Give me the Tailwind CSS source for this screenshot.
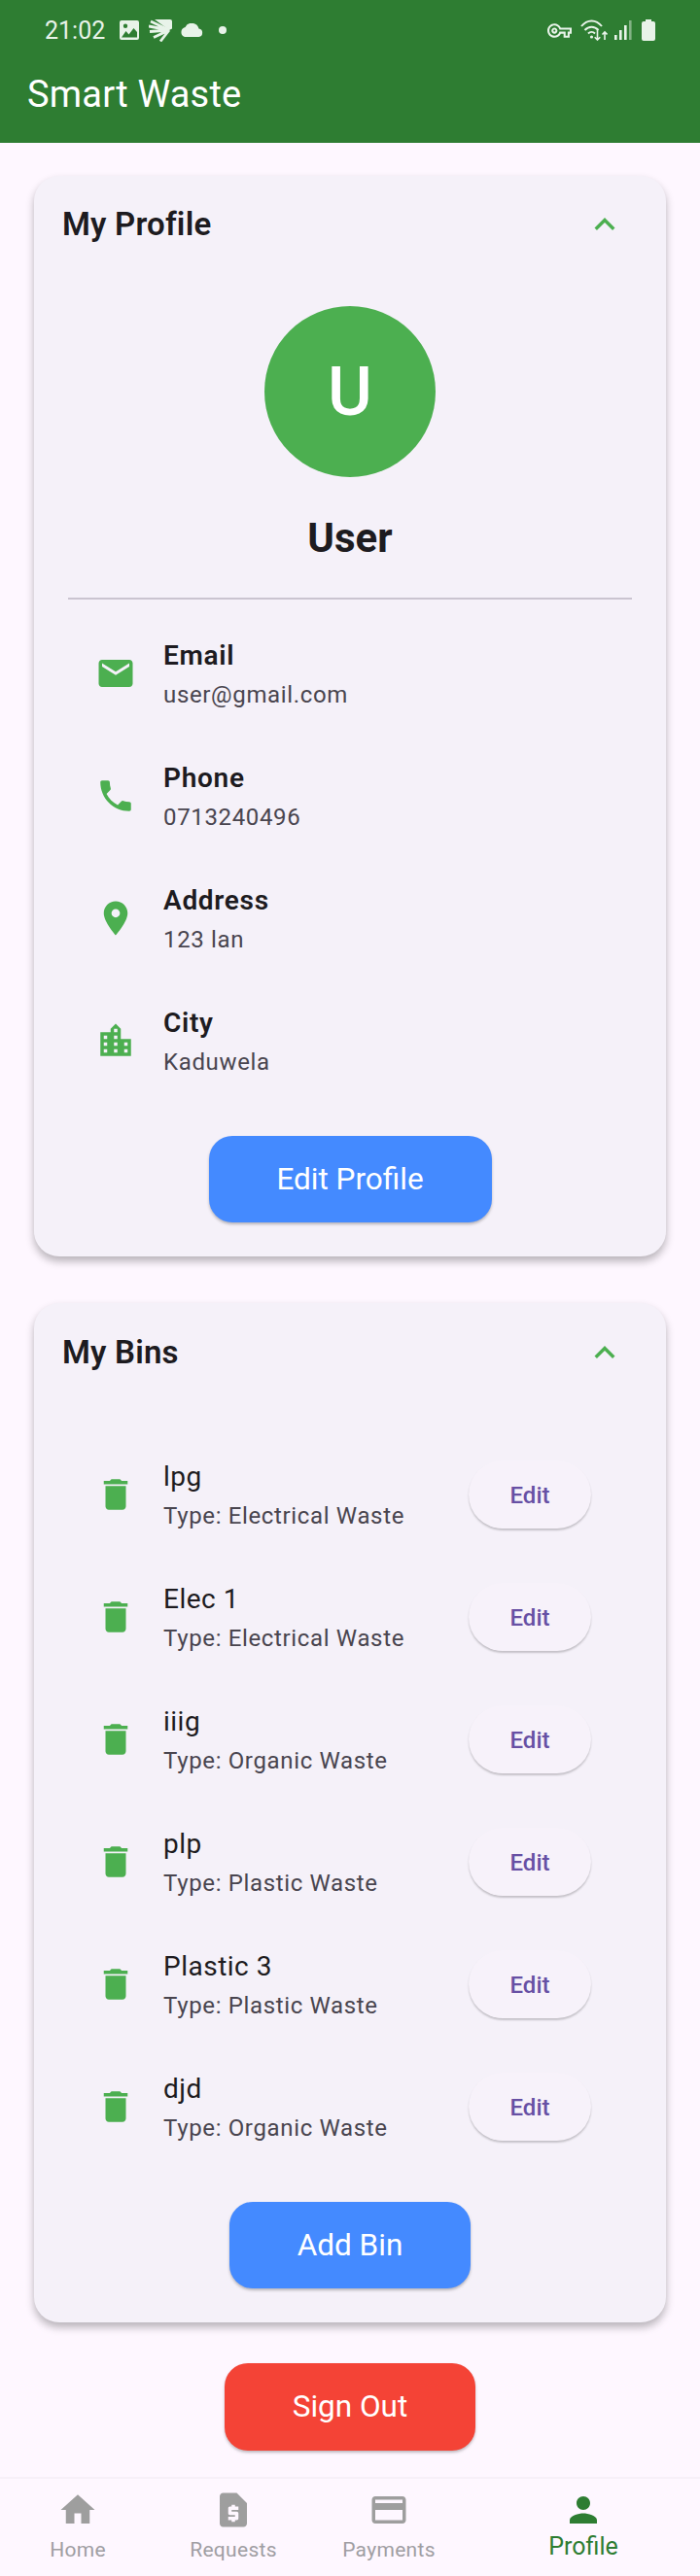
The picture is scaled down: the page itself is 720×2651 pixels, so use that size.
<!DOCTYPE html>
<html lang="en">
  <head>
    <meta charset="UTF-8" />
    <meta name="viewport" content="width=device-width, initial-scale=1.0" />
    <title>Smart Waste</title>
    <script src="https://cdn.jsdelivr.net/npm/@tailwindcss/browser@4"></script>
  </head>
  <body class="bg-[#fef7ff] font-['Roboto',sans-serif] text-[#1d1b20]">
    <div class="w-[720px] h-[2651px] flex flex-col overflow-hidden">
      <!-- App bar + status bar -->
      <header class="bg-[#2e7d32] h-[147px] shrink-0 text-white">
        <div class="h-[62px] flex items-center justify-between pl-[46px] pr-[46px]">
          <div class="flex items-center text-[#e8f3e9]">
            <span class="text-[25px] leading-none w-[66px]">21:02</span>
            <svg class="ml-[11px]" width="20" height="20" viewBox="0 0 20 20" fill="currentColor"><path fill-rule="evenodd" d="M2 0h16a2 2 0 0 1 2 2v16a2 2 0 0 1-2 2H2a2 2 0 0 1-2-2V2a2 2 0 0 1 2-2zm0 17.500h16V12l-3.500-4-5 6.500-3-3.500zM6 3.500a2.200 2.200 0 1 0 0 4.400 2.200 2.200 0 0 0 0-4.400z"/></svg>
            <svg class="ml-[10px]" width="24" height="23" viewBox="0 0 24 23" fill="none" stroke="currentColor"><path d="M6 0h16a2 2 0 0 1 2 2v7.500L21 11z" fill="currentColor" stroke="none"/><path d="M21 11L2 2M21 11L0 7M21 11L1 12.500M21 11L5 18.500M21 11L12 22.500" stroke-width="2.800"/></svg>
            <svg class="ml-[8px]" width="24" height="14" viewBox="0 0 24 14" fill="currentColor"><path d="M19.500 5.500A7.500 7.500 0 0 0 5.500 4 5.200 5.200 0 0 0 5 14h14.500a4.300 4.300 0 0 0 0-8.500z"/></svg>
            <span class="ml-[16px] w-[8px] h-[8px] rounded-full bg-current"></span>
          </div>
          <div class="flex items-center text-[#e8f3e9]">
            <svg width="25" height="25" viewBox="0 0 24 24" fill="currentColor"><path d="M22 19h-6v-4h-2.680c-1.140 2.420-3.600 4-6.320 4-3.860 0-7-3.140-7-7s3.140-7 7-7c2.720 0 5.170 1.580 6.320 4H24v6h-2v4zm-4-2h2v-4h2v-2H11.940l-.23-.67C11.010 8.340 9.110 7 7 7c-2.760 0-5 2.240-5 5s2.240 5 5 5c2.110 0 4.010-1.340 4.710-3.330l.23-.67H18v4zM7 15c-1.650 0-3-1.350-3-3s1.350-3 3-3 3 1.350 3 3-1.350 3-3 3zm0-4c-.55 0-1 .45-1 1s.45 1 1 1 1-.45 1-1-.45-1-1-1z"/></svg>
            <svg class="ml-[9px]" width="28" height="22" viewBox="0 0 28 22" fill="none" stroke="currentColor" stroke-width="2"><path d="M1 7c6-7.500 15-7.500 21 0M4.500 11c4-4.500 10-4.500 14 0M8 14.500c2-2 5-2 7 0"/><circle cx="11.500" cy="18" r="1.600" fill="currentColor" stroke="none"/><path d="M17.500 11v10m-2.800-2.800l2.800 2.800 2.800-2.800M25 21v-8m-2.500 2.500L25 13l2.500 2.500" stroke-width="1.600"/></svg>
            <svg class="ml-[7px]" width="18" height="20" viewBox="0 0 18 20" fill="currentColor"><rect x="0" y="15" width="2.600" height="5"/><rect x="5" y="10" width="2.600" height="10"/><rect x="10" y="5" width="2.600" height="15"/><rect x="15" y="0" width="2.600" height="20" opacity=".45"/></svg>
            <svg class="ml-[10px]" width="14" height="22" viewBox="0 0 14 22" fill="currentColor"><path d="M4 0h6v2h2a2 2 0 0 1 2 2v16a2 2 0 0 1-2 2H2a2 2 0 0 1-2-2V4a2 2 0 0 1 2-2h2z"/></svg>
          </div>
        </div>
        <h1 class="pl-[28px] text-[38px] leading-[64px] mt-[3px] tracking-[0.2px]">Smart Waste</h1>
      </header>

      <main class="flex-1 min-h-0 px-[35px] pt-[34px]">
        <!-- Profile card -->
        <section class="bg-[#f5f1f9] rounded-[26px] shadow-[0_5px_8px_rgba(0,0,0,0.28)] px-[29px] pb-[35px]">
          <div class="h-[100px] flex items-center justify-between pr-[13px]">
            <h2 class="text-[33px] font-semibold tracking-[0.2px]">My Profile</h2>
            <svg width="42" height="42" viewBox="0 0 24 24" fill="#4caf50"><path d="M12 8l-6 6 1.410 1.410L12 10.830l4.590 4.580L18 14z"/></svg>
          </div>
          <div class="flex flex-col items-center">
            <div class="w-[176px] h-[176px] rounded-full bg-[#4caf50] text-white flex items-center justify-center text-[70px] font-medium mt-[34px]">U</div>
            <p class="text-[42px] font-bold leading-[48px] mt-[39px]">User</p>
          </div>
          <div class="h-[2px] bg-[#cac4d0] mx-[6px] mt-[37px]"></div>
          <!-- Info rows -->
          <ul class="mt-[13px] pl-[34px]">
            <li class="h-[126px] flex items-center">
              <svg class="w-[42px] h-[42px]" viewBox="0 0 24 24" fill="#4caf50"><path d="M20 4H4c-1.100 0-1.990.9-1.990 2L2 18c0 1.100.9 2 2 2h16c1.100 0 2-.9 2-2V6c0-1.100-.9-2-2-2zm0 4l-8 5-8-5V6l8 5 8-5v2z"/></svg>
              <div class="ml-[28px] pt-[4px]"><p class="text-[28px] font-semibold leading-[38px] tracking-[0.7px]">Email</p><p class="text-[24px] text-[#49454f] leading-[38px] mt-[2px] tracking-[0.65px]">user@gmail.com</p></div>
            </li>
            <li class="h-[126px] flex items-center">
              <svg class="w-[42px] h-[42px]" viewBox="0 0 24 24" fill="#4caf50"><path d="M6.620 10.790c1.440 2.830 3.760 5.140 6.590 6.590l2.200-2.200c.27-.27.67-.36 1.020-.24 1.120.37 2.330.57 3.570.57.550 0 1 .45 1 1V20c0 .55-.45 1-1 1-9.390 0-17-7.610-17-17 0-.55.45-1 1-1h3.500c.55 0 1 .45 1 1 0 1.250.2 2.450.57 3.570.11.350.03.740-.25 1.020l-2.200 2.200z"/></svg>
              <div class="ml-[28px] pt-[4px]"><p class="text-[28px] font-semibold leading-[38px] tracking-[0.7px]">Phone</p><p class="text-[24px] text-[#49454f] leading-[38px] mt-[2px] tracking-[0.65px]">0713240496</p></div>
            </li>
            <li class="h-[126px] flex items-center">
              <svg class="w-[42px] h-[42px]" viewBox="0 0 24 24" fill="#4caf50"><path d="M12 2C8.130 2 5 5.130 5 9c0 5.250 7 13 7 13s7-7.750 7-13c0-3.870-3.130-7-7-7zm0 9.500a2.500 2.500 0 0 1 0-5 2.500 2.500 0 0 1 0 5z"/></svg>
              <div class="ml-[28px] pt-[4px]"><p class="text-[28px] font-semibold leading-[38px] tracking-[0.7px]">Address</p><p class="text-[24px] text-[#49454f] leading-[38px] mt-[2px] tracking-[0.65px]">123 lan</p></div>
            </li>
            <li class="h-[126px] flex items-center">
              <svg class="w-[42px] h-[42px]" viewBox="0 0 24 24" fill="#4caf50"><path d="M15 11V5l-3-3-3 3v2H3v14h18V11h-6zm-8 8H5v-2h2v2zm0-4H5v-2h2v2zm0-4H5V9h2v2zm6 8h-2v-2h2v2zm0-4h-2v-2h2v2zm0-4h-2V9h2v2zm0-4h-2V5h2v2zm6 12h-2v-2h2v2zm0-4h-2v-2h2v2z"/></svg>
              <div class="ml-[28px] pt-[4px]"><p class="text-[28px] font-semibold leading-[38px] tracking-[0.7px]">City</p><p class="text-[24px] text-[#49454f] leading-[38px] mt-[2px] tracking-[0.65px]">Kaduwela</p></div>
            </li>
          </ul>
          <div class="flex justify-center mt-[35px]">
            <button class="w-[291px] h-[89px] rounded-[24px] bg-[#448aff] text-white text-[31.5px] shadow-[0_2px_3px_rgba(0,0,0,0.25)]">Edit Profile</button>
          </div>
        </section>

        <!-- Bins card -->
        <section class="mt-[48px] bg-[#f5f1f9] rounded-[26px] shadow-[0_5px_8px_rgba(0,0,0,0.28)] px-[29px] pb-[35px]">
          <div class="h-[102px] flex items-center justify-between pr-[13px]">
            <h2 class="text-[33px] font-semibold tracking-[0.2px]">My Bins</h2>
            <svg width="42" height="42" viewBox="0 0 24 24" fill="#4caf50"><path d="M12 8l-6 6 1.410 1.410L12 10.830l4.590 4.580L18 14z"/></svg>
          </div>
          <ul class="mt-[32px] pl-[34px] pr-[48px]">
            <li class="h-[126px] flex items-center">
              <svg class="w-[42px] h-[42px]" viewBox="0 0 24 24" fill="#4caf50"><path d="M6 19c0 1.100.9 2 2 2h8c1.100 0 2-.9 2-2V7H6v12zM19 4h-3.500l-1-1h-5l-1 1H5v2h14V4z"/></svg>
              <div class="ml-[28px] pt-[4px] flex-1"><p class="text-[28px] leading-[38px] tracking-[0.5px]">lpg</p><p class="text-[24px] text-[#49454f] leading-[38px] mt-[2px] tracking-[0.65px]">Type: Electrical Waste</p></div>
              <button class="w-[126px] h-[70px] pt-[2px] rounded-full bg-[#f7f2fa] text-[#6750a4] text-[24px] font-medium shadow-[0_2px_2px_rgba(0,0,0,0.2)]">Edit</button>
            </li>
            <li class="h-[126px] flex items-center">
              <svg class="w-[42px] h-[42px]" viewBox="0 0 24 24" fill="#4caf50"><path d="M6 19c0 1.100.9 2 2 2h8c1.100 0 2-.9 2-2V7H6v12zM19 4h-3.500l-1-1h-5l-1 1H5v2h14V4z"/></svg>
              <div class="ml-[28px] pt-[4px] flex-1"><p class="text-[28px] leading-[38px] tracking-[0.5px]">Elec 1</p><p class="text-[24px] text-[#49454f] leading-[38px] mt-[2px] tracking-[0.65px]">Type: Electrical Waste</p></div>
              <button class="w-[126px] h-[70px] pt-[2px] rounded-full bg-[#f7f2fa] text-[#6750a4] text-[24px] font-medium shadow-[0_2px_2px_rgba(0,0,0,0.2)]">Edit</button>
            </li>
            <li class="h-[126px] flex items-center">
              <svg class="w-[42px] h-[42px]" viewBox="0 0 24 24" fill="#4caf50"><path d="M6 19c0 1.100.9 2 2 2h8c1.100 0 2-.9 2-2V7H6v12zM19 4h-3.500l-1-1h-5l-1 1H5v2h14V4z"/></svg>
              <div class="ml-[28px] pt-[4px] flex-1"><p class="text-[28px] leading-[38px] tracking-[0.5px]">iiig</p><p class="text-[24px] text-[#49454f] leading-[38px] mt-[2px] tracking-[0.65px]">Type: Organic Waste</p></div>
              <button class="w-[126px] h-[70px] pt-[2px] rounded-full bg-[#f7f2fa] text-[#6750a4] text-[24px] font-medium shadow-[0_2px_2px_rgba(0,0,0,0.2)]">Edit</button>
            </li>
            <li class="h-[126px] flex items-center">
              <svg class="w-[42px] h-[42px]" viewBox="0 0 24 24" fill="#4caf50"><path d="M6 19c0 1.100.9 2 2 2h8c1.100 0 2-.9 2-2V7H6v12zM19 4h-3.500l-1-1h-5l-1 1H5v2h14V4z"/></svg>
              <div class="ml-[28px] pt-[4px] flex-1"><p class="text-[28px] leading-[38px] tracking-[0.5px]">plp</p><p class="text-[24px] text-[#49454f] leading-[38px] mt-[2px] tracking-[0.65px]">Type: Plastic Waste</p></div>
              <button class="w-[126px] h-[70px] pt-[2px] rounded-full bg-[#f7f2fa] text-[#6750a4] text-[24px] font-medium shadow-[0_2px_2px_rgba(0,0,0,0.2)]">Edit</button>
            </li>
            <li class="h-[126px] flex items-center">
              <svg class="w-[42px] h-[42px]" viewBox="0 0 24 24" fill="#4caf50"><path d="M6 19c0 1.100.9 2 2 2h8c1.100 0 2-.9 2-2V7H6v12zM19 4h-3.500l-1-1h-5l-1 1H5v2h14V4z"/></svg>
              <div class="ml-[28px] pt-[4px] flex-1"><p class="text-[28px] leading-[38px] tracking-[0.5px]">Plastic 3</p><p class="text-[24px] text-[#49454f] leading-[38px] mt-[2px] tracking-[0.65px]">Type: Plastic Waste</p></div>
              <button class="w-[126px] h-[70px] pt-[2px] rounded-full bg-[#f7f2fa] text-[#6750a4] text-[24px] font-medium shadow-[0_2px_2px_rgba(0,0,0,0.2)]">Edit</button>
            </li>
            <li class="h-[126px] flex items-center">
              <svg class="w-[42px] h-[42px]" viewBox="0 0 24 24" fill="#4caf50"><path d="M6 19c0 1.100.9 2 2 2h8c1.100 0 2-.9 2-2V7H6v12zM19 4h-3.500l-1-1h-5l-1 1H5v2h14V4z"/></svg>
              <div class="ml-[28px] pt-[4px] flex-1"><p class="text-[28px] leading-[38px] tracking-[0.5px]">djd</p><p class="text-[24px] text-[#49454f] leading-[38px] mt-[2px] tracking-[0.65px]">Type: Organic Waste</p></div>
              <button class="w-[126px] h-[70px] pt-[2px] rounded-full bg-[#f7f2fa] text-[#6750a4] text-[24px] font-medium shadow-[0_2px_2px_rgba(0,0,0,0.2)]">Edit</button>
            </li>
          </ul>
          <div class="flex justify-center mt-[35px]">
            <button class="w-[248px] h-[89px] rounded-[24px] bg-[#448aff] text-white text-[31.5px] shadow-[0_2px_3px_rgba(0,0,0,0.25)]">Add Bin</button>
          </div>
        </section>

        <div class="flex justify-center mt-[42px]">
          <button class="w-[258px] h-[90px] rounded-[24px] bg-[#f44336] text-white text-[31.5px] shadow-[0_2px_3px_rgba(0,0,0,0.25)]">Sign Out</button>
        </div>
      </main>

      <!-- Bottom navigation -->
      <nav class="h-[102px] shrink-0 grid grid-cols-[160px_160px_160px_240px] border-t-2 border-[#f7f0f8] pt-[11px] text-[#a09ea3]">
        <a class="flex flex-col items-center">
          <svg class="w-[42px] h-[42px]" viewBox="0 0 24 24" fill="#9e9e9e"><path d="M10 20v-6h4v6h5v-8h3L12 3 2 12h3v8z"/></svg>
          <span class="text-[21px] leading-[28px] mt-[6px] tracking-[0.3px]">Home</span>
        </a>
        <a class="flex flex-col items-center">
          <svg class="w-[42px] h-[42px]" viewBox="0 0 24 24" fill="#9e9e9e"><path d="M14 2H6c-1.100 0-1.990.9-1.990 2L4 20c0 1.100.89 2 1.990 2H18c1.100 0 2-.9 2-2V8l-6-6zm1 10h-4v1h3c.55 0 1 .45 1 1v3c0 .55-.45 1-1 1h-1v1h-2v-1H9v-2h4v-1h-3c-.55 0-1-.45-1-1v-3c0-.55.45-1 1-1h1V9h2v1h2v2z"/></svg>
          <span class="text-[21px] leading-[28px] mt-[6px] tracking-[0.3px]">Requests</span>
        </a>
        <a class="flex flex-col items-center">
          <svg class="w-[42px] h-[42px]" viewBox="0 0 24 24" fill="#9e9e9e"><path d="M20 4H4c-1.110 0-1.990.89-1.990 2L2 18c0 1.110.89 2 2 2h16c1.110 0 2-.89 2-2V6c0-1.110-.89-2-2-2zm0 14H4v-6h16v6zm0-10H4V6h16v2z"/></svg>
          <span class="text-[21px] leading-[28px] mt-[6px] tracking-[0.3px]">Payments</span>
        </a>
        <a class="flex flex-col items-center text-[#2e7d32]">
          <svg class="w-[42px] h-[42px]" viewBox="0 0 24 24" fill="#2e7d32"><path d="M12 12c2.210 0 4-1.790 4-4s-1.790-4-4-4-4 1.790-4 4 1.790 4 4 4zm0 2c-2.670 0-8 1.340-8 4v2h16v-2c0-2.660-5.330-4-8-4z"/></svg>
          <span class="text-[25px] leading-[28px] mt-[3px]">Profile</span>
        </a>
      </nav>
    </div>
  </body>
</html>
